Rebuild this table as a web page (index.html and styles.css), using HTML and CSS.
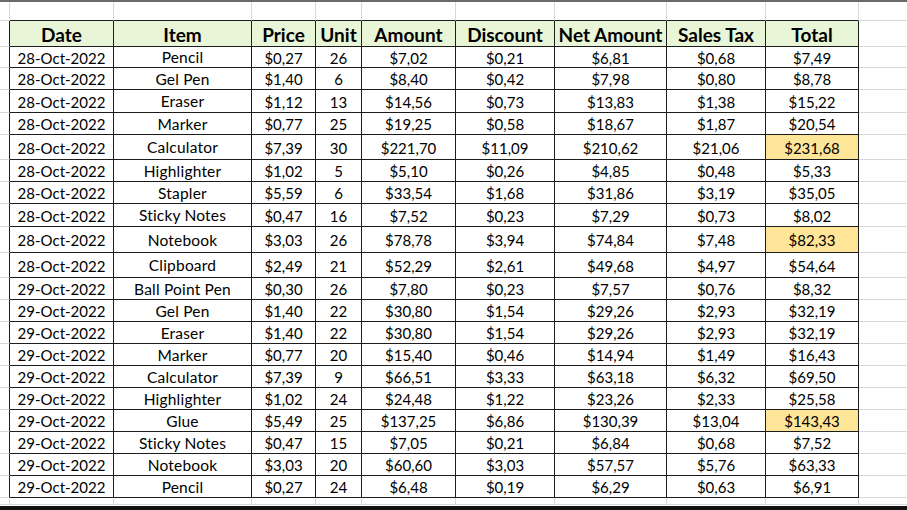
FILE: index.html
```html
<!DOCTYPE html>
<html>
<head>
<meta charset="utf-8">
<link rel="stylesheet" href="styles.css">
</head>
<body>
<div class="topline"></div>
<table class="sheet">
<colgroup>
<col class="c-gut"><col class="c-date"><col class="c-item"><col class="c-price"><col class="c-unit"><col class="c-amount"><col class="c-disc"><col class="c-net"><col class="c-tax"><col class="c-total"><col class="c-rest">
</colgroup>
<tbody>
<tr class="r-top"><td class="g"></td><td class="gt"></td><td class="gt"></td><td class="gt"></td><td class="gt"></td><td class="gt"></td><td class="gt"></td><td class="gt"></td><td class="gt"></td><td class="gt"></td><td class="g last"></td></tr>
<tr class="r-head"><td class="edge"></td><th>Date</th><th>Item</th><th>Price</th><th>Unit</th><th>Amount</th><th>Discount</th><th>Net Amount</th><th>Sales Tax</th><th>Total</th><td class="g last"></td></tr>
<tr class="h21"><td class="edge"></td><td>28-Oct-2022</td><td>Pencil</td><td>$0,27</td><td>26</td><td>$7,02</td><td>$0,21</td><td>$6,81</td><td>$0,68</td><td>$7,49</td><td class="g last"></td></tr>
<tr class="h22"><td class="edge"></td><td>28-Oct-2022</td><td>Gel Pen</td><td>$1,40</td><td>6</td><td>$8,40</td><td>$0,42</td><td>$7,98</td><td>$0,80</td><td>$8,78</td><td class="g last"></td></tr>
<tr class="h23"><td class="edge"></td><td>28-Oct-2022</td><td>Eraser</td><td>$1,12</td><td>13</td><td>$14,56</td><td>$0,73</td><td>$13,83</td><td>$1,38</td><td>$15,22</td><td class="g last"></td></tr>
<tr class="h22"><td class="edge"></td><td>28-Oct-2022</td><td>Marker</td><td>$0,77</td><td>25</td><td>$19,25</td><td>$0,58</td><td>$18,67</td><td>$1,87</td><td>$20,54</td><td class="g last"></td></tr>
<tr class="h25"><td class="edge"></td><td>28-Oct-2022</td><td>Calculator</td><td>$7,39</td><td>30</td><td>$221,70</td><td>$11,09</td><td>$210,62</td><td>$21,06</td><td class="hl">$231,68</td><td class="g last"></td></tr>
<tr class="h22"><td class="edge"></td><td>28-Oct-2022</td><td>Highlighter</td><td>$1,02</td><td>5</td><td>$5,10</td><td>$0,26</td><td>$4,85</td><td>$0,48</td><td>$5,33</td><td class="g last"></td></tr>
<tr class="h22"><td class="edge"></td><td>28-Oct-2022</td><td>Stapler</td><td>$5,59</td><td>6</td><td>$33,54</td><td>$1,68</td><td>$31,86</td><td>$3,19</td><td>$35,05</td><td class="g last"></td></tr>
<tr class="h23"><td class="edge"></td><td>28-Oct-2022</td><td>Sticky Notes</td><td>$0,47</td><td>16</td><td>$7,52</td><td>$0,23</td><td>$7,29</td><td>$0,73</td><td>$8,02</td><td class="g last"></td></tr>
<tr class="h26"><td class="edge"></td><td>28-Oct-2022</td><td>Notebook</td><td>$3,03</td><td>26</td><td>$78,78</td><td>$3,94</td><td>$74,84</td><td>$7,48</td><td class="hl">$82,33</td><td class="g last"></td></tr>
<tr class="h25"><td class="edge"></td><td>28-Oct-2022</td><td>Clipboard</td><td>$2,49</td><td>21</td><td>$52,29</td><td>$2,61</td><td>$49,68</td><td>$4,97</td><td>$54,64</td><td class="g last"></td></tr>
<tr class="h22"><td class="edge"></td><td>29-Oct-2022</td><td>Ball Point Pen</td><td>$0,30</td><td>26</td><td>$7,80</td><td>$0,23</td><td>$7,57</td><td>$0,76</td><td>$8,32</td><td class="g last"></td></tr>
<tr class="h22"><td class="edge"></td><td>29-Oct-2022</td><td>Gel Pen</td><td>$1,40</td><td>22</td><td>$30,80</td><td>$1,54</td><td>$29,26</td><td>$2,93</td><td>$32,19</td><td class="g last"></td></tr>
<tr class="h22"><td class="edge"></td><td>29-Oct-2022</td><td>Eraser</td><td>$1,40</td><td>22</td><td>$30,80</td><td>$1,54</td><td>$29,26</td><td>$2,93</td><td>$32,19</td><td class="g last"></td></tr>
<tr class="h22"><td class="edge"></td><td>29-Oct-2022</td><td>Marker</td><td>$0,77</td><td>20</td><td>$15,40</td><td>$0,46</td><td>$14,94</td><td>$1,49</td><td>$16,43</td><td class="g last"></td></tr>
<tr class="h22"><td class="edge"></td><td>29-Oct-2022</td><td>Calculator</td><td>$7,39</td><td>9</td><td>$66,51</td><td>$3,33</td><td>$63,18</td><td>$6,32</td><td>$69,50</td><td class="g last"></td></tr>
<tr class="h22"><td class="edge"></td><td>29-Oct-2022</td><td>Highlighter</td><td>$1,02</td><td>24</td><td>$24,48</td><td>$1,22</td><td>$23,26</td><td>$2,33</td><td>$25,58</td><td class="g last"></td></tr>
<tr class="h22"><td class="edge"></td><td>29-Oct-2022</td><td>Glue</td><td>$5,49</td><td>25</td><td>$137,25</td><td>$6,86</td><td>$130,39</td><td>$13,04</td><td class="hl">$143,43</td><td class="g last"></td></tr>
<tr class="h22"><td class="edge"></td><td>29-Oct-2022</td><td>Sticky Notes</td><td>$0,47</td><td>15</td><td>$7,05</td><td>$0,21</td><td>$6,84</td><td>$0,68</td><td>$7,52</td><td class="g last"></td></tr>
<tr class="h22"><td class="edge"></td><td>29-Oct-2022</td><td>Notebook</td><td>$3,03</td><td>20</td><td>$60,60</td><td>$3,03</td><td>$57,57</td><td>$5,76</td><td>$63,33</td><td class="g last"></td></tr>
<tr class="h22"><td class="edge"></td><td>29-Oct-2022</td><td>Pencil</td><td>$0,27</td><td>24</td><td>$6,48</td><td>$0,19</td><td>$6,29</td><td>$0,63</td><td>$6,91</td><td class="g last"></td></tr>
<tr class="r-bottom"><td class="g"></td><td class="g"></td><td class="g"></td><td class="g"></td><td class="g"></td><td class="g"></td><td class="g"></td><td class="g"></td><td class="g"></td><td class="g"></td><td class="g last"></td></tr>
</tbody>
</table>
<div class="bottombar"></div>
</body>
</html>
```

FILE: styles.css
```css
html, body {
  margin: 0;
  padding: 0;
  background: #ffffff;
  overflow: hidden;
}

body {
  width: 907px;
  height: 510px;
  font-family: Lato, "Open Sans", sans-serif;
  color: #000;
}

.topline {
  height: 2px;
  background: #6a6a6a;
}

.sheet {
  border-collapse: separate;
  border-spacing: 0;
  table-layout: fixed;
  width: 907px;
}

.c-gut { width: 10px; }
.c-date { width: 104px; }
.c-item { width: 138px; }
.c-price { width: 64px; }
.c-unit { width: 46px; }
.c-amount { width: 94px; }
.c-disc { width: 99px; }
.c-net { width: 112px; }
.c-tax { width: 99px; }
.c-total { width: 93px; }
.c-rest { width: 48px; }

.sheet td,
.sheet th {
  padding: 2px 0 0;
  border-right: 1px solid #1c1c1c;
  border-bottom: 1px solid #1c1c1c;
  text-align: center;
  vertical-align: middle;
  white-space: nowrap;
  overflow: hidden;
  font-size: 15px;
  line-height: 1;
  font-weight: 400;
}

.sheet td:nth-child(3) {
  font-size: 15.5px;
  letter-spacing: 0.2px;
}

.sheet th {
  background: #e8f5d6;
  font-weight: 700;
  font-size: 19px;
}

.sheet td.g {
  border-right-color: #d9d9d9;
  border-bottom-color: #d9d9d9;
}

.sheet td.gt {
  border-right-color: #d9d9d9;
  border-bottom-color: #1c1c1c;
}

.sheet td.edge {
  border-bottom-color: #d9d9d9;
}

.sheet td.last {
  border-right: none;
}

.sheet td.hl {
  background: #ffe598;
}

.r-top { height: 19px; }
.r-head { height: 26px; }
.h21 { height: 21px; }
.h22 { height: 22px; }
.h23 { height: 23px; }
.h25 { height: 25px; }
.h26 { height: 26px; }
.r-bottom { height: 7px; }

.bottombar {
  margin-top: 1px;
  height: 5px;
  background: #111;
}
```
